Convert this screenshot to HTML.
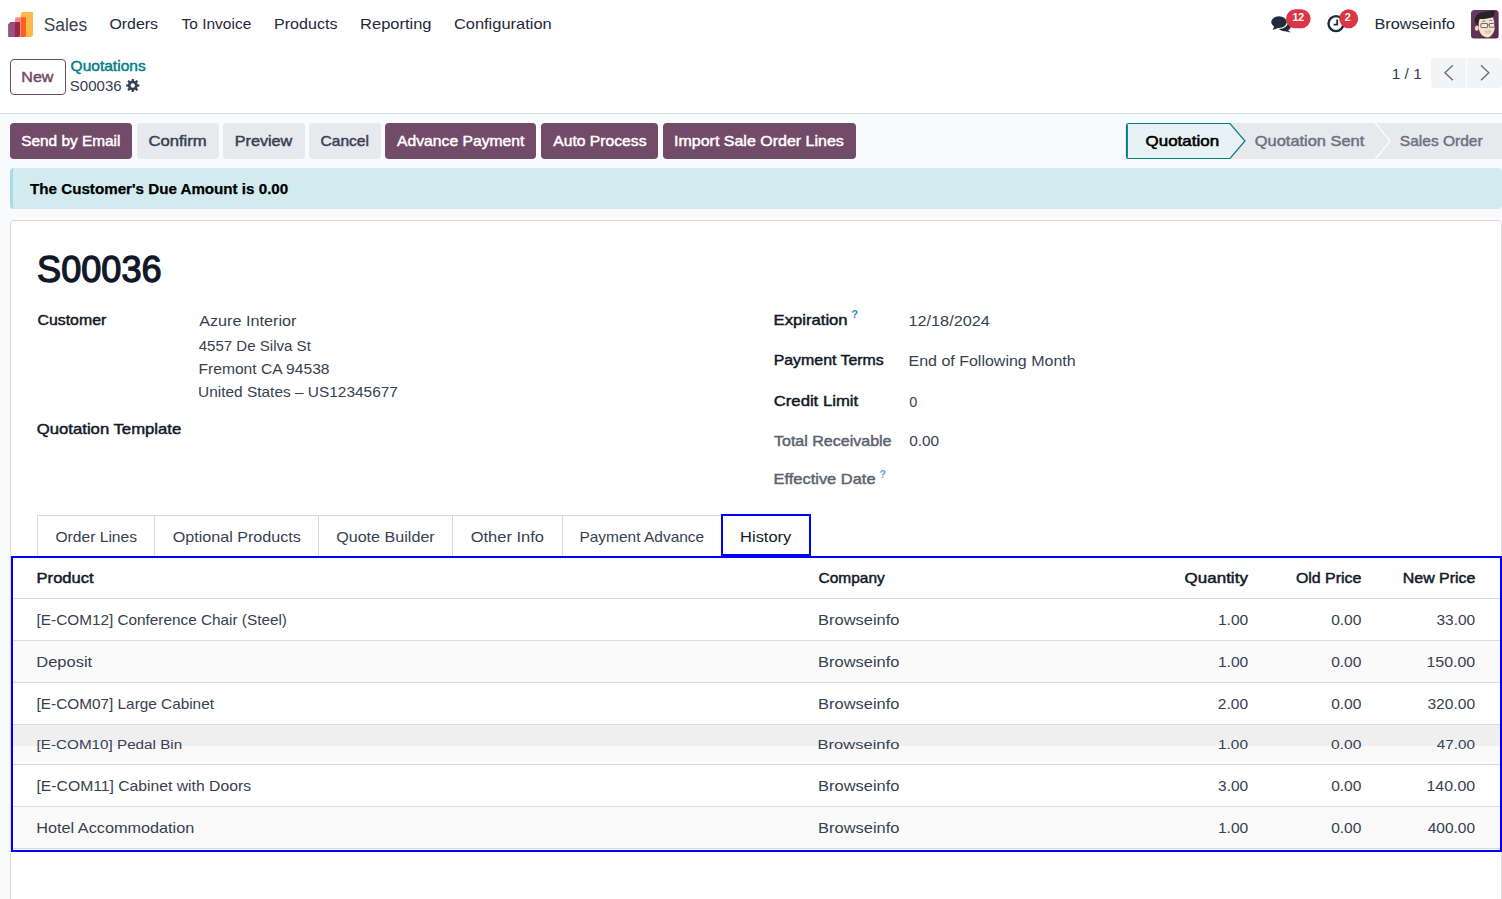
<!DOCTYPE html>
<html lang="en"><head><meta charset="utf-8"><title>Odoo - S00036</title>
<style>
html,body{margin:0;padding:0;background:#f9fafb;}
body{font-family:"Liberation Sans",sans-serif;overflow:hidden;}
#root{position:relative;width:1502px;height:899px;overflow:hidden;background:#f9fafb;}
#root *{box-sizing:border-box;}
.t{position:absolute;white-space:pre;line-height:1;font-family:"Liberation Sans",sans-serif;}
.b{position:absolute;}
.btn{position:absolute;top:123px;height:36px;border-radius:4px;}
.pri{background:#714b67;}
.sec{background:#e7e9ed;}
.row{position:absolute;left:13px;width:1487px;border-bottom:1px solid #d8dadd;}
.tabsep{position:absolute;top:516px;width:1px;height:40px;background:#d9d9d9;}
svg{position:absolute;overflow:visible;}

</style></head>
<body>
<div id="root">
<div class="b" style="left:0;top:0;width:1502px;height:114px;background:#fff;border-bottom:1px solid #d8dadd"></div>
<svg class="b" style="left:0;top:0" width="48" height="46">
<path fill="#fbb945" d="M23.4 11.9H33V35l-2 2H20.9V14.4q0-2.5 2.500-2.500z"/>
<path fill="#fc868b" d="M17.100 17.300H26V35q0 2-2 2H14.900V19.500q0-2.200 2.200-2.200z"/>
<path fill="#f86126" d="M20.900 17.300H26V35q0 2-2 2H20.900z"/>
<path fill="#985184" d="M10.300 22H19.900V34.800q0 2.200-2.200 2.200H8.100V24.200z"/>
<path fill="#962b48" d="M14.900 22H19.900V34.800q0 2.200-2.200 2.200H14.900z"/>
</svg>
<svg class="b" style="left:0;top:0" width="1502" height="46">
<g fill="#222b3c">
<ellipse cx="1284.300" cy="26.400" rx="6.500" ry="4.800"/>
<path d="M1287 29.300 L1290.600 32.500 L1284 31z"/>
<ellipse cx="1279" cy="22.100" rx="9" ry="7" fill="#fff"/>
<ellipse cx="1279" cy="22.100" rx="7.800" ry="5.900"/>
<path d="M1274.600 25.800 L1272.700 29.900 L1279.500 27.600z"/>
</g>
<rect x="1286" y="9.300" width="24.600" height="19" rx="9.500" fill="#dc3545"/>
<circle cx="1336" cy="23.600" r="7.500" fill="#fff" stroke="#222b3c" stroke-width="2.400"/>
<path d="M1337.200 19.600V24.600H1333.600" fill="none" stroke="#222b3c" stroke-width="1.800"/>
<circle cx="1348.700" cy="18.800" r="9.500" fill="#dc3545"/>
</svg>
<svg class="b" style="left:1471.100px;top:10px" width="27.800" height="28.700" viewBox="205 135 625 645" preserveAspectRatio="none">
<defs><linearGradient id="ag" x1="0" y1="0" x2="1" y2="1"><stop offset="0" stop-color="#6c3d60"/><stop offset="1" stop-color="#55284a"/></linearGradient>
<clipPath id="ac"><rect x="205" y="135" width="625" height="645" rx="80"/></clipPath></defs>
<g clip-path="url(#ac)">
<rect x="205" y="135" width="625" height="645" fill="url(#ag)"/>
<ellipse cx="335" cy="545" rx="42" ry="62" fill="#f6d3bb"/>
<path fill="#fbe1ca" d="M365 340 L700 300 L742 480 Q748 660 620 742 Q540 775 450 705 Q378 620 368 480 Z"/>
<path fill="#26232a" d="M285 360 Q300 230 440 190 Q560 160 680 150 Q700 140 740 165 Q735 250 700 290 Q600 330 400 340 Q370 400 372 500 Q340 480 315 440 Q285 410 285 360 Z"/>
<path d="M455 395 Q490 370 530 390" stroke="#3a3030" stroke-width="14" fill="none"/>
<path d="M615 372 Q645 355 680 372" stroke="#3a3030" stroke-width="14" fill="none"/>
<rect x="428" y="440" width="150" height="90" rx="10" fill="#f3ece6" stroke="#5a5654" stroke-width="20"/>
<rect x="618" y="438" width="115" height="84" rx="10" fill="#f3ece6" stroke="#5a5654" stroke-width="20"/>
<path d="M578 470H618" stroke="#5a5654" stroke-width="16"/>
<ellipse cx="600" cy="572" rx="32" ry="10" fill="#f0b5a5"/>
<path d="M518 615 Q585 640 655 608 Q640 660 585 662 Q535 660 518 615Z" fill="#e9e4e0" stroke="#8a7d78" stroke-width="8"/>
</g></svg>
<div class="b" style="left:10px;top:59px;width:56px;height:36px;border:1px solid #714b67;border-radius:4px;background:#fff"></div>
<svg class="b" style="left:0;top:0" width="1502" height="120"><path fill="#374151" fill-rule="evenodd" d="M131.53 80.75 L131.70 78.88 L133.80 78.88 L133.97 80.75 L135.24 81.28 L136.69 80.08 L138.17 81.56 L136.97 83.01 L137.50 84.28 L139.37 84.45 L139.37 86.55 L137.50 86.72 L136.97 87.99 L138.17 89.44 L136.69 90.92 L135.24 89.72 L133.97 90.25 L133.80 92.12 L131.70 92.12 L131.53 90.25 L130.26 89.72 L128.81 90.92 L127.33 89.44 L128.53 87.99 L128.00 86.72 L126.13 86.55 L126.13 84.45 L128.00 84.28 L128.53 83.01 L127.33 81.56 L128.81 80.08 L130.26 81.28 Z M130.55 85.50 a2.2 2.2 0 1 0 4.4 0 a2.2 2.2 0 1 0 -4.4 0 Z"/></svg>
<div class="b" style="left:1431px;top:58px;width:35px;height:30px;background:#f3f4f6;border-radius:4px 0 0 4px"></div>
<div class="b" style="left:1467px;top:58px;width:35px;height:30px;background:#f3f4f6;border-radius:0 4px 4px 0"></div>
<svg class="b" style="left:0;top:0" width="1502" height="120"><g fill="none" stroke="#6f6f6f" stroke-width="1.400">
<path d="M1452.800 65.200 L1445 72.700 L1452.800 80.200"/><path d="M1481 65.200 L1488.800 72.700 L1481 80.200"/></g></svg>
<div class="btn pri" style="left:10px;width:122px"></div>
<div class="btn sec" style="left:137px;width:82px"></div>
<div class="btn sec" style="left:223px;width:82px"></div>
<div class="btn sec" style="left:309px;width:72px"></div>
<div class="btn pri" style="left:385px;width:151px"></div>
<div class="btn pri" style="left:541px;width:117px"></div>
<div class="btn pri" style="left:663px;width:193px"></div>
<svg class="b" style="left:0;top:0" width="1502" height="170">
<rect x="1229" y="123" width="273" height="36" fill="#e7e9ed"/>
<path d="M1375 122.500 L1390 141 L1375 159.500" fill="none" stroke="#f9fafb" stroke-width="1.600"/>
<path d="M1128.500 123.500 H1230 L1245 141 L1230 158.500 H1128.500 Q1126.500 158.500 1126.500 156.500 V125.500 Q1126.500 123.500 1128.500 123.500 Z" fill="#e6f2f3" stroke="#017e84" stroke-width="1.200"/>
<path d="M1127 125 V157" stroke="#017e84" stroke-width="1.800" fill="none"/>
</svg>
<div class="b" style="left:10px;top:168px;width:1492px;height:41px;background:#d2ebf0;border-left:3px solid #a9dbe4;border-radius:4px"></div>
<div class="b" style="left:10px;top:220px;width:1492px;height:700px;background:#fff;border:1px solid #d8dadd;border-radius:4px"></div>
<div class="b" style="left:37px;top:515px;width:685px;height:41px;border-top:1px solid #d9d9d9;border-left:1px solid #d9d9d9"></div>
<div class="tabsep" style="left:154px"></div>
<div class="tabsep" style="left:318px"></div>
<div class="tabsep" style="left:452px"></div>
<div class="tabsep" style="left:562px"></div>
<div class="row" style="top:558px;height:41px;background:#fff"></div>
<div class="row" style="top:599px;height:42px;background:#fff"></div>
<div class="row" style="top:641px;height:42px;background:#fafafa"></div>
<div class="row" style="top:683px;height:42px;background:#fff"></div>
<div class="row" style="top:725px;height:40px;background:linear-gradient(#efefef 0,#efefef 21.500px,#fafafa 21.500px)"></div>
<div class="row" style="top:765px;height:42px;background:#fff"></div>
<div class="row" style="top:807px;height:42px;background:#fafafa"></div>
<div class="b" style="left:11px;top:556px;width:1491px;height:296px;border:2px solid #0000ff"></div>
<div class="b" style="left:721px;top:514px;width:90px;height:42px;border:2px solid #0000ff;background:#fff"></div>
<span class="t" id="t0" style="top:16.00px;font-size:18.8px;color:#374151;left:43px;transform-origin:0 85%;transform:translateX(0.71px) scale(0.9223,1);">Sales</span>
<span class="t" id="t1" style="top:17.00px;font-size:14.5px;color:#1f2937;left:109px;transform-origin:0 85%;transform:translateX(0.38px) scale(1.0976,1);">Orders</span>
<span class="t" id="t2" style="top:17.00px;font-size:14.5px;color:#1f2937;left:181px;transform-origin:0 85%;transform:translateX(0.55px) scale(1.0674,1);">To Invoice</span>
<span class="t" id="t3" style="top:17.00px;font-size:14.5px;color:#1f2937;left:274px;transform-origin:0 85%;transform:translateX(0.03px) scale(1.1076,1);">Products</span>
<span class="t" id="t4" style="top:17.00px;font-size:14.5px;color:#1f2937;left:360px;transform-origin:0 85%;transform:translateX(0.11px) scale(1.1351,1);">Reporting</span>
<span class="t" id="t5" style="top:17.00px;font-size:14.5px;color:#1f2937;left:453px;transform-origin:0 85%;transform:translateX(0.90px) scale(1.1336,1);">Configuration</span>
<span class="t" id="t6" style="top:17.00px;font-size:14.5px;color:#1f2937;left:1374px;transform-origin:0 85%;transform:translateX(0.45px) scale(1.1237,1);">Browseinfo</span>
<span class="t" id="t7" style="top:12.00px;font-size:10.8px;color:#fff;font-weight:700;left:1292px;transform-origin:0 85%;transform:translateX(0.44px) scale(0.9810,1);">12</span>
<span class="t" id="t8" style="top:12.00px;font-size:10.8px;color:#fff;font-weight:700;left:1344px;transform-origin:0 85%;transform:translateX(0.82px);">2</span>
<span class="t" id="t9" style="top:70.00px;font-size:14.5px;color:#714b67;-webkit-text-stroke:0.45px #714b67;left:21px;transform-origin:0 85%;transform:translateX(0.26px) scale(1.1104,1);">New</span>
<span class="t" id="t10" style="top:59.00px;font-size:14.5px;color:#017e84;-webkit-text-stroke:0.45px #017e84;left:70px;transform-origin:0 85%;transform:translateX(0.59px) scale(1.0703,1);">Quotations</span>
<span class="t" id="t11" style="top:79.00px;font-size:14.5px;color:#374151;left:69px;transform-origin:0 85%;transform:translateX(0.86px) scale(1.0341,1);">S00036</span>
<span class="t" id="t12" style="top:67.00px;font-size:14.5px;color:#374151;left:1391px;transform-origin:0 85%;transform:translateX(0.68px) scale(1.0658,1);">1 / 1</span>
<span class="t" id="t13" style="top:134.00px;font-size:14.5px;color:#fff;-webkit-text-stroke:0.45px #fff;left:21px;transform-origin:0 85%;transform:translateX(0.20px) scale(1.0609,1);">Send by Email</span>
<span class="t" id="t14" style="top:134.00px;font-size:14.5px;color:#374151;-webkit-text-stroke:0.45px #374151;left:148px;transform-origin:0 85%;transform:translateX(0.38px) scale(1.1486,1);">Confirm</span>
<span class="t" id="t15" style="top:134.00px;font-size:14.5px;color:#374151;-webkit-text-stroke:0.45px #374151;left:234px;transform-origin:0 85%;transform:translateX(0.69px) scale(1.1173,1);">Preview</span>
<span class="t" id="t16" style="top:134.00px;font-size:14.5px;color:#374151;-webkit-text-stroke:0.45px #374151;left:320px;transform-origin:0 85%;transform:translateX(0.53px) scale(1.0734,1);">Cancel</span>
<span class="t" id="t17" style="top:134.00px;font-size:14.5px;color:#fff;-webkit-text-stroke:0.45px #fff;left:397px;transform-origin:0 85%;transform:translateX(0.09px) scale(1.0815,1);">Advance Payment</span>
<span class="t" id="t18" style="top:134.00px;font-size:14.5px;color:#fff;-webkit-text-stroke:0.45px #fff;left:553px;transform-origin:0 85%;transform:translateX(0.23px) scale(1.0814,1);">Auto Process</span>
<span class="t" id="t19" style="top:134.00px;font-size:14.5px;color:#fff;-webkit-text-stroke:0.45px #fff;left:673px;transform-origin:0 85%;transform:translateX(1.00px) scale(1.1030,1);">Import Sale Order Lines</span>
<span class="t" id="t20" style="top:134.00px;font-size:14.5px;color:#000;-webkit-text-stroke:0.55px #000;letter-spacing:0.021px;left:1145px;transform-origin:0 85%;transform:translateX(0.59px) scale(1.1648,1);">Quotation</span>
<span class="t" id="t21" style="top:134.00px;font-size:14.5px;color:#6b7280;-webkit-text-stroke:0.45px #6b7280;left:1254px;transform-origin:0 85%;transform:translateX(0.83px) scale(1.1313,1);">Quotation Sent</span>
<span class="t" id="t22" style="top:134.00px;font-size:14.5px;color:#6b7280;-webkit-text-stroke:0.45px #6b7280;left:1399px;transform-origin:0 85%;transform:translateX(0.84px) scale(1.0706,1);">Sales Order</span>
<span class="t" id="t23" style="top:182.00px;font-size:14.5px;color:#000;font-weight:700;-webkit-text-stroke:0.25px #000;left:30px;transform-origin:0 85%;transform:translateX(0.12px) scale(1.0446,1);">The Customer&#x27;s Due Amount is 0.00</span>
<span class="t" id="t24" style="top:252.00px;font-size:36.6px;color:#111827;-webkit-text-stroke:1.3px #111827;left:37px;transform-origin:0 85%;transform:translateX(0.11px) scale(0.9870,1);">S00036</span>
<span class="t" id="t25" style="top:313.00px;font-size:14.5px;color:#111827;-webkit-text-stroke:0.45px #111827;left:37px;transform-origin:0 85%;transform:translateX(0.53px) scale(1.0932,1);">Customer</span>
<span class="t" id="t26" style="top:314.00px;font-size:14.5px;color:#374151;left:199px;transform-origin:0 85%;transform:translateX(0.17px) scale(1.1182,1);">Azure Interior</span>
<span class="t" id="t27" style="top:339.00px;font-size:14.5px;color:#374151;left:198px;transform-origin:0 85%;transform:translateX(0.66px) scale(1.0385,1);">4557 De Silva St</span>
<span class="t" id="t28" style="top:362.00px;font-size:14.5px;color:#374151;left:198px;transform-origin:0 85%;transform:translateX(0.51px) scale(1.0763,1);">Fremont CA 94538</span>
<span class="t" id="t29" style="top:385.00px;font-size:14.5px;color:#374151;left:198px;transform-origin:0 85%;transform:translateX(0.11px) scale(1.0635,1);">United States – US12345677</span>
<span class="t" id="t30" style="top:422.00px;font-size:14.5px;color:#111827;-webkit-text-stroke:0.45px #111827;left:36px;transform-origin:0 85%;transform:translateX(0.78px) scale(1.1514,1);">Quotation Template</span>
<span class="t" id="t31" style="top:313.00px;font-size:14.5px;color:#111827;-webkit-text-stroke:0.45px #111827;left:773px;transform-origin:0 85%;transform:translateX(0.51px) scale(1.1498,1);">Expiration</span>
<span class="t" id="t32" style="top:309.00px;font-size:10.5px;color:#1b8ab3;font-weight:700;left:851px;transform-origin:0 85%;transform:translateX(0.53px);">?</span>
<span class="t" id="t33" style="top:314.00px;font-size:14.5px;color:#374151;left:908px;transform-origin:0 85%;transform:translateX(0.44px) scale(1.1225,1);">12/18/2024</span>
<span class="t" id="t34" style="top:353.00px;font-size:14.5px;color:#111827;-webkit-text-stroke:0.45px #111827;left:773px;transform-origin:0 85%;transform:translateX(0.66px) scale(1.0964,1);">Payment Terms</span>
<span class="t" id="t35" style="top:354.00px;font-size:14.5px;color:#374151;left:908px;transform-origin:0 85%;transform:translateX(0.53px) scale(1.1027,1);">End of Following Month</span>
<span class="t" id="t36" style="top:394.00px;font-size:14.5px;color:#111827;-webkit-text-stroke:0.45px #111827;left:773px;transform-origin:0 85%;transform:translateX(0.74px) scale(1.1510,1);">Credit Limit</span>
<span class="t" id="t37" style="top:395.00px;font-size:14.5px;color:#374151;left:909px;transform-origin:0 85%;transform:translateX(0.15px);">0</span>
<span class="t" id="t38" style="top:434.00px;font-size:14.5px;color:#5c6370;-webkit-text-stroke:0.45px #5c6370;left:773px;transform-origin:0 85%;transform:translateX(1.00px) scale(1.1046,1);">Total Receivable</span>
<span class="t" id="t39" style="top:434.00px;font-size:14.5px;color:#374151;left:909px;transform-origin:0 85%;transform:translateX(0.17px) scale(1.0622,1);">0.00</span>
<span class="t" id="t40" style="top:472.00px;font-size:14.5px;color:#5c6370;-webkit-text-stroke:0.45px #5c6370;left:773px;transform-origin:0 85%;transform:translateX(0.54px) scale(1.1333,1);">Effective Date</span>
<span class="t" id="t41" style="top:469.00px;font-size:10.5px;color:#5aa9c6;font-weight:700;left:879px;transform-origin:0 85%;transform:translateX(0.52px);">?</span>
<span class="t" id="t42" style="top:530.00px;font-size:14.5px;color:#374151;left:55px;transform-origin:0 85%;transform:translateX(0.40px) scale(1.0780,1);">Order Lines</span>
<span class="t" id="t43" style="top:530.00px;font-size:14.5px;color:#374151;left:172px;transform-origin:0 85%;transform:translateX(0.63px) scale(1.1131,1);">Optional Products</span>
<span class="t" id="t44" style="top:530.00px;font-size:14.5px;color:#374151;left:336px;transform-origin:0 85%;transform:translateX(0.14px) scale(1.1121,1);">Quote Builder</span>
<span class="t" id="t45" style="top:530.00px;font-size:14.5px;color:#374151;left:470px;transform-origin:0 85%;transform:translateX(0.70px) scale(1.1370,1);">Other Info</span>
<span class="t" id="t46" style="top:530.00px;font-size:14.5px;color:#374151;left:579px;transform-origin:0 85%;transform:translateX(0.42px) scale(1.0676,1);">Payment Advance</span>
<span class="t" id="t47" style="top:530.00px;font-size:14.5px;color:#111827;left:740px;transform-origin:0 85%;transform:translateX(0.11px) scale(1.1339,1);">History</span>
<span class="t" id="t48" style="top:571.00px;font-size:14.5px;color:#111827;-webkit-text-stroke:0.45px #111827;left:36px;transform-origin:0 85%;transform:translateX(0.55px) scale(1.1438,1);">Product</span>
<span class="t" id="t49" style="top:571.00px;font-size:14.5px;color:#111827;-webkit-text-stroke:0.45px #111827;left:818px;transform-origin:0 85%;transform:translateX(0.54px) scale(1.0676,1);">Company</span>
<span class="t" id="t50" style="top:571.00px;font-size:14.5px;color:#111827;-webkit-text-stroke:0.45px #111827;letter-spacing:0.014px;right:254px;transform-origin:100% 85%;transform:translateX(-0.23px) scale(1.1700,1);">Quantity</span>
<span class="t" id="t51" style="top:571.00px;font-size:14.5px;color:#111827;-webkit-text-stroke:0.45px #111827;right:140px;transform-origin:100% 85%;transform:translateX(-0.19px) scale(1.0993,1);">Old Price</span>
<span class="t" id="t52" style="top:571.00px;font-size:14.5px;color:#111827;-webkit-text-stroke:0.45px #111827;right:26px;transform-origin:100% 85%;transform:translateX(-0.75px) scale(1.0973,1);">New Price</span>
<span class="t" id="t53" style="top:613.00px;font-size:14.5px;color:#374151;left:36px;transform-origin:0 85%;transform:translateX(0.57px) scale(1.0569,1);">[E-COM12] Conference Chair (Steel)</span>
<span class="t" id="t54" style="top:613.00px;font-size:14.5px;color:#374151;left:818px;transform-origin:0 85%;transform:translateX(0.11px) scale(1.1328,1);">Browseinfo</span>
<span class="t" id="t55" style="top:613.00px;font-size:14.5px;color:#374151;right:253px;transform-origin:100% 85%;transform:translateX(-0.92px) scale(1.0776,1);">1.00</span>
<span class="t" id="t56" style="top:613.00px;font-size:14.5px;color:#374151;right:140px;transform-origin:100% 85%;transform:translateX(-0.83px) scale(1.0722,1);">0.00</span>
<span class="t" id="t57" style="top:613.00px;font-size:14.5px;color:#374151;right:27px;transform-origin:100% 85%;transform:translateX(-0.09px) scale(1.0674,1);">33.00</span>
<span class="t" id="t58" style="top:655.00px;font-size:14.5px;color:#374151;left:36px;transform-origin:0 85%;transform:translateX(0.23px) scale(1.1376,1);">Deposit</span>
<span class="t" id="t59" style="top:655.00px;font-size:14.5px;color:#374151;left:818px;transform-origin:0 85%;transform:translateX(0.11px) scale(1.1328,1);">Browseinfo</span>
<span class="t" id="t60" style="top:655.00px;font-size:14.5px;color:#374151;right:253px;transform-origin:100% 85%;transform:translateX(-0.92px) scale(1.0776,1);">1.00</span>
<span class="t" id="t61" style="top:655.00px;font-size:14.5px;color:#374151;right:140px;transform-origin:100% 85%;transform:translateX(-0.83px) scale(1.0722,1);">0.00</span>
<span class="t" id="t62" style="top:655.00px;font-size:14.5px;color:#374151;right:27px;transform-origin:100% 85%;transform:translateX(-0.17px) scale(1.0975,1);">150.00</span>
<span class="t" id="t63" style="top:697.00px;font-size:14.5px;color:#374151;left:36px;transform-origin:0 85%;transform:translateX(0.57px) scale(1.0581,1);">[E-COM07] Large Cabinet</span>
<span class="t" id="t64" style="top:697.00px;font-size:14.5px;color:#374151;left:818px;transform-origin:0 85%;transform:translateX(0.11px) scale(1.1328,1);">Browseinfo</span>
<span class="t" id="t65" style="top:697.00px;font-size:14.5px;color:#374151;right:254px;transform-origin:100% 85%;transform:translateX(-0.17px) scale(1.0707,1);">2.00</span>
<span class="t" id="t66" style="top:697.00px;font-size:14.5px;color:#374151;right:140px;transform-origin:100% 85%;transform:translateX(-0.83px) scale(1.0722,1);">0.00</span>
<span class="t" id="t67" style="top:697.00px;font-size:14.5px;color:#374151;right:27px;transform-origin:100% 85%;transform:translateX(-0.12px) scale(1.0782,1);">320.00</span>
<span class="t" id="t68" style="top:737.00px;font-size:14.5px;color:#374151;left:36px;transform-origin:0 85%;transform:translateX(0.56px) scale(1.0506,0.9);">[E-COM10] Pedal Bin</span>
<span class="t" id="t69" style="top:737.00px;font-size:14.5px;color:#374151;left:817px;transform-origin:0 85%;transform:translateX(0.54px) scale(1.1402,0.9);">Browseinfo</span>
<span class="t" id="t70" style="top:737.00px;font-size:14.5px;color:#374151;right:254px;transform-origin:100% 85%;transform:translateX(-0.21px) scale(1.0636,0.9);">1.00</span>
<span class="t" id="t71" style="top:737.00px;font-size:14.5px;color:#374151;right:140px;transform-origin:100% 85%;transform:translateX(-0.83px) scale(1.0740,0.9);">0.00</span>
<span class="t" id="t72" style="top:737.00px;font-size:14.5px;color:#374151;right:27px;transform-origin:100% 85%;transform:translateX(-0.26px) scale(1.0532,0.9);">47.00</span>
<span class="t" id="t73" style="top:779.00px;font-size:14.5px;color:#374151;left:36px;transform-origin:0 85%;transform:translateX(0.49px) scale(1.0835,1);">[E-COM11] Cabinet with Doors</span>
<span class="t" id="t74" style="top:779.00px;font-size:14.5px;color:#374151;left:818px;transform-origin:0 85%;transform:translateX(0.11px) scale(1.1328,1);">Browseinfo</span>
<span class="t" id="t75" style="top:779.00px;font-size:14.5px;color:#374151;right:254px;transform-origin:100% 85%;transform:translateX(-0.12px) scale(1.0640,1);">3.00</span>
<span class="t" id="t76" style="top:779.00px;font-size:14.5px;color:#374151;right:140px;transform-origin:100% 85%;transform:translateX(-0.83px) scale(1.0722,1);">0.00</span>
<span class="t" id="t77" style="top:779.00px;font-size:14.5px;color:#374151;right:27px;transform-origin:100% 85%;transform:translateX(-0.17px) scale(1.0975,1);">140.00</span>
<span class="t" id="t78" style="top:821.00px;font-size:14.5px;color:#374151;left:36px;transform-origin:0 85%;transform:translateX(0.30px) scale(1.1199,1);">Hotel Accommodation</span>
<span class="t" id="t79" style="top:821.00px;font-size:14.5px;color:#374151;left:818px;transform-origin:0 85%;transform:translateX(0.11px) scale(1.1328,1);">Browseinfo</span>
<span class="t" id="t80" style="top:821.00px;font-size:14.5px;color:#374151;right:253px;transform-origin:100% 85%;transform:translateX(-0.92px) scale(1.0776,1);">1.00</span>
<span class="t" id="t81" style="top:821.00px;font-size:14.5px;color:#374151;right:140px;transform-origin:100% 85%;transform:translateX(-0.83px) scale(1.0722,1);">0.00</span>
<span class="t" id="t82" style="top:821.00px;font-size:14.5px;color:#374151;right:27px;transform-origin:100% 85%;transform:translateX(-0.31px) scale(1.0662,1);">400.00</span>
</div>
</body></html>
